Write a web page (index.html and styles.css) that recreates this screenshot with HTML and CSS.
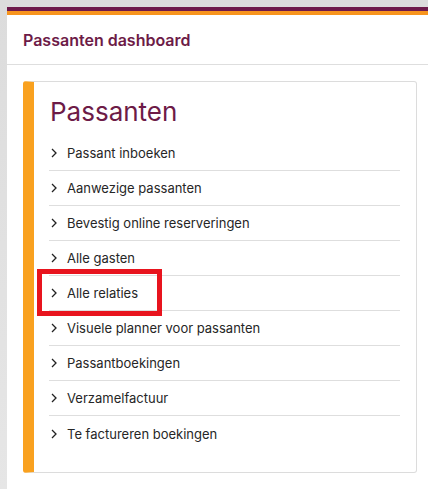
FILE: index.html
```html
<!DOCTYPE html>
<html lang="nl">
<head>
<meta charset="utf-8">
<title>Passanten dashboard</title>
<link rel="stylesheet" href="styles.css">
</head>
<body>
<div class="panel">
  <div class="panel-header">Passanten dashboard</div>
  <div class="panel-body">
    <div class="card">
      <h1 class="card-title">Passanten</h1>
      <ul class="menu">
        <li class="menu-item"><svg class="chev" viewBox="0 0 6 10"><path d="M1 1 L5 5 L1 9" /></svg><span>Passant inboeken</span></li>
        <li class="menu-item"><svg class="chev" viewBox="0 0 6 10"><path d="M1 1 L5 5 L1 9" /></svg><span>Aanwezige passanten</span></li>
        <li class="menu-item"><svg class="chev" viewBox="0 0 6 10"><path d="M1 1 L5 5 L1 9" /></svg><span>Bevestig online reserveringen</span></li>
        <li class="menu-item"><svg class="chev" viewBox="0 0 6 10"><path d="M1 1 L5 5 L1 9" /></svg><span>Alle gasten</span></li>
        <li class="menu-item highlighted"><svg class="chev" viewBox="0 0 6 10"><path d="M1 1 L5 5 L1 9" /></svg><span>Alle relaties</span><div class="mark"></div></li>
        <li class="menu-item"><svg class="chev" viewBox="0 0 6 10"><path d="M1 1 L5 5 L1 9" /></svg><span>Visuele planner voor passanten</span></li>
        <li class="menu-item"><svg class="chev" viewBox="0 0 6 10"><path d="M1 1 L5 5 L1 9" /></svg><span>Passantboekingen</span></li>
        <li class="menu-item"><svg class="chev" viewBox="0 0 6 10"><path d="M1 1 L5 5 L1 9" /></svg><span>Verzamelfactuur</span></li>
        <li class="menu-item last"><svg class="chev" viewBox="0 0 6 10"><path d="M1 1 L5 5 L1 9" /></svg><span>Te factureren boekingen</span></li>
      </ul>
    </div>
  </div>
</div>
</body>
</html>
```

FILE: styles.css
```css
html, body {
  margin: 0;
  padding: 0;
}
body {
  background: linear-gradient(180deg, #dcdcdc 0%, #e6e6e6 100%);
  font-family: Inter, "Noto Sans", "Liberation Sans", sans-serif;
  padding: 7px 0 0 7px;
  height: 489px;
  box-sizing: border-box;
  overflow: hidden;
}
.panel {
  background: #fff;
  border-top: 4px solid #6e1a4b;
  height: 100%;
  box-sizing: border-box;
}
.panel-header {
  border-top: 4px solid #f7941d;
  height: 54px;
  box-sizing: border-box;
  border-bottom: 1px solid #dedede;
  padding: 0 16px;
  display: flex;
  align-items: center;
  font-size: 16px;
  font-weight: 600;
  color: #6d1b47;
}
.panel-body {
  padding: 16px 11px 0 16px;
}
.card {
  border: 1px solid #dcdcdc;
  border-left: 11px solid #f9a11f;
  border-radius: 3px;
  background: #fff;
  padding: 13px 16px 21px 15px;
  height: 392px;
  box-sizing: border-box;
}
.card-title {
  margin: 0 0 7px 1px;
  font-size: 26px;
  line-height: 34px;
  font-weight: 400;
  color: #6d1b47;
}
.menu {
  list-style: none;
  margin: 0;
  padding: 0;
}
.menu-item {
  position: relative;
  display: flex;
  align-items: center;
  gap: 10px;
  height: 35px;
  box-sizing: border-box;
  border-bottom: 1px solid #dedede;
  padding-left: 2px;
  font-size: 13px;
  color: #262626;
}
.menu-item.last {
  border-bottom: none;
}
.chev {
  width: 6px;
  height: 10px;
  flex: none;
}
.chev path {
  fill: none;
  stroke: #222;
  stroke-width: 1.3;
}
.mark {
  position: absolute;
  left: -12px;
  top: -7px;
  width: 125px;
  height: 47px;
  border: 5px solid #e8141e;
  box-sizing: border-box;
}
```
